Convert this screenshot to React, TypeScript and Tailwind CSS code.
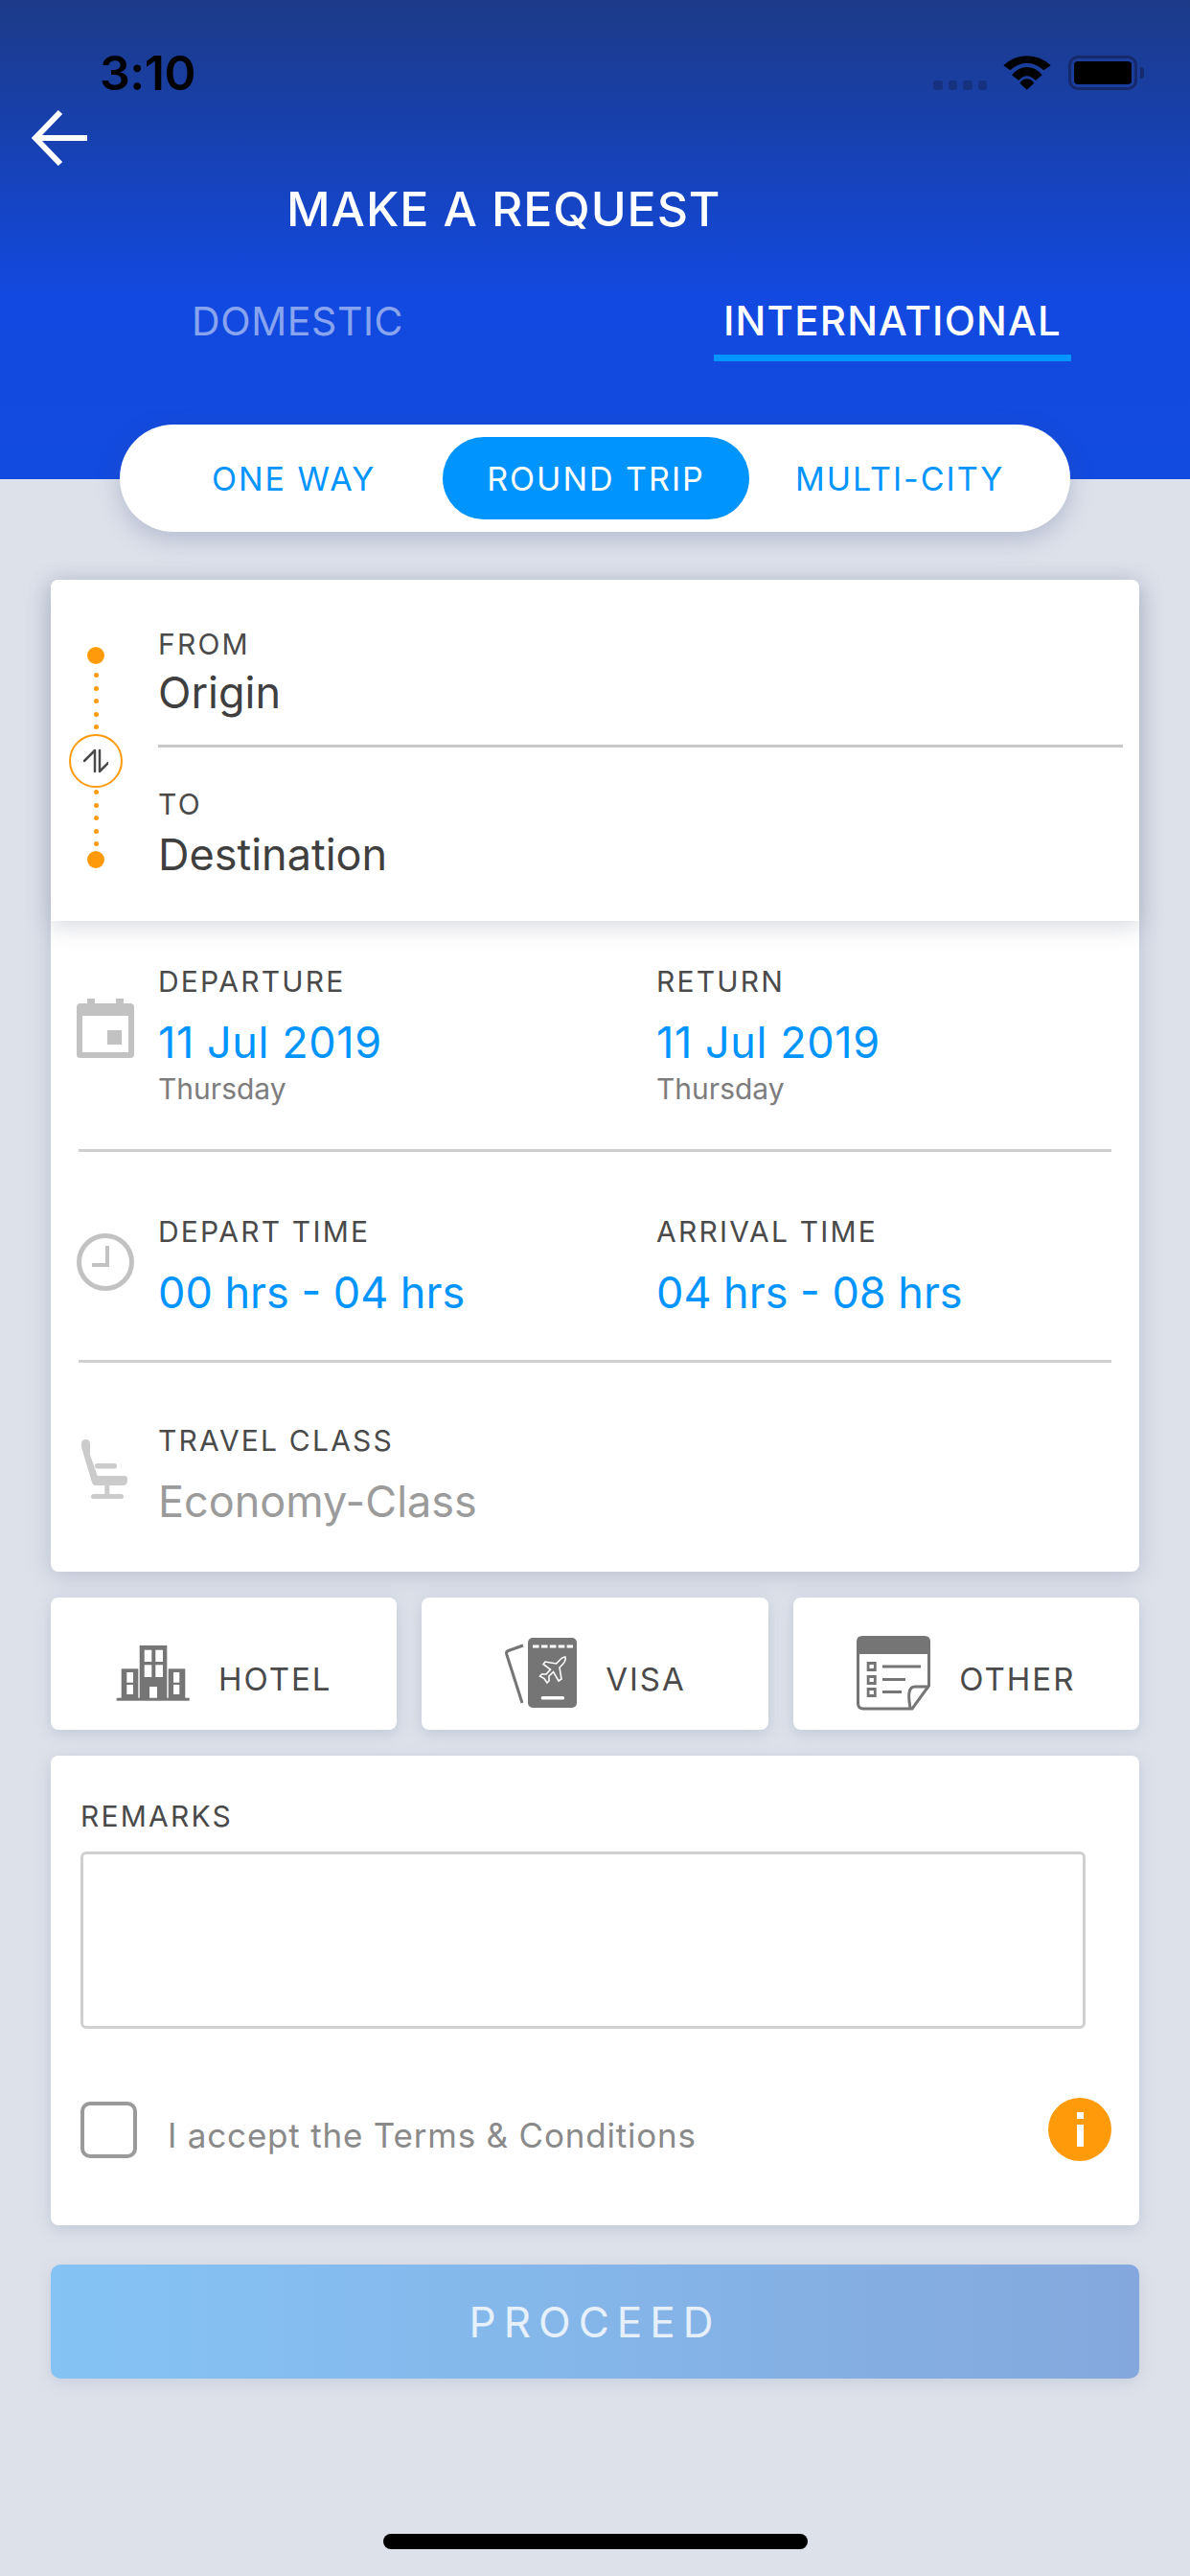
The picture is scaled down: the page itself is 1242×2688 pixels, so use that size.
import type { ReactNode } from 'react'

function Wifi() {
  return (
    <svg width="52" height="38" viewBox="0 0 52 38" className="ml-[16px]">
      <path d="M1.300 11.300Q12 1.300 25.700 1.300Q40 1.300 50.700 11.300L43.300 16.300Q35 8.700 25.700 8.700Q16.500 8.700 8.300 16.300Z" fill="#000" />
      <path d="M10 21.300Q17 13 25.700 13Q35 13 41.700 21.300L34.700 27Q30.500 22.300 25.700 22.300Q21 22.300 17.300 27Z" fill="#000" />
      <path d="M18.300 29.700Q21.500 25.300 25.700 25.300Q30 25.300 33.300 29.700L25.700 36.700Z" fill="#000" />
    </svg>
  )
}

function Battery() {
  return (
    <div className="ml-[17px] flex items-center">
      <div className="w-[72px] h-[36px] rounded-[10px] border-[3px] border-[#16296b] p-[3px]">
        <div className="w-full h-full rounded-[4px] bg-black" />
      </div>
      <div className="ml-[3px] w-[4px] h-[12px] rounded-r-[4px] bg-[#16296b]" />
    </div>
  )
}

function BackArrow() {
  return (
    <svg width="58" height="58" viewBox="0 0 58 58" fill="none" stroke="#fff" strokeWidth="6">
      <path d="M58 29H6" />
      <path d="M30 2L4 29L30 56" />
    </svg>
  )
}

function CalendarIcon() {
  return (
    <svg width="60" height="62" viewBox="0 0 60 62">
      <path fillRule="evenodd" fill="#c2c2c2" d="M4 5H11V0H19V5H41V0H49V5H56Q60 5 60 9V58Q60 62 56 62H4Q0 62 0 58V9Q0 5 4 5ZM6 18V56H54V18Z" />
      <rect x="32" y="33" width="15" height="15" fill="#c2c2c2" />
    </svg>
  )
}

function ClockIcon() {
  return (
    <svg width="60" height="60" viewBox="0 0 60 60" fill="none" stroke="#c2c2c2" strokeWidth="5">
      <circle cx="30" cy="30" r="27.500" />
      <path d="M32 13V33H16" strokeWidth="4" />
    </svg>
  )
}

function SeatIcon() {
  return (
    <svg width="48" height="64" viewBox="0 0 48 64" fill="#cbcbcb">
      <path d="M0 6Q0 1 4.500 1Q9 1 9 6V17L16.700 39H45Q48 39 48 42V44Q48 49 43 49H14Q12 49 11 46L0 9Z" />
      <rect x="14" y="26" width="23" height="5.500" rx="2.700" />
      <rect x="24.300" y="48" width="5" height="11" />
      <rect x="10" y="58" width="34" height="5" rx="2.500" />
    </svg>
  )
}

function SwapIcon() {
  return (
    <svg width="26" height="26" viewBox="0 0 26 26" fill="none" stroke="#4a4a4a" strokeWidth="2.500" strokeLinecap="round" strokeLinejoin="round">
      <path d="M1 13L12 2V24" />
      <path d="M17 2V24L26 15" />
    </svg>
  )
}

function HotelIcon() {
  return (
    <svg width="77" height="58" viewBox="0 0 77 58" fill="#757575">
      <rect x="24.700" y="0" width="28.600" height="56" />
      <rect x="5.700" y="24.300" width="17.600" height="31" />
      <rect x="54.700" y="24.300" width="17.600" height="31" />
      <rect x="0.700" y="54.700" width="76" height="3" />
      <g fill="#fff">
        <rect x="29.700" y="4.700" width="7.600" height="12.300" />
        <rect x="41.300" y="4.700" width="7.700" height="12.300" />
        <rect x="29.700" y="20.300" width="7.600" height="12.700" />
        <rect x="41.300" y="20.300" width="7.700" height="12.700" />
        <rect x="35" y="43" width="8" height="11.700" />
        <rect x="11.300" y="28" width="6.700" height="10.700" />
        <rect x="11.300" y="41" width="6.700" height="10" />
        <rect x="60" y="28" width="6.300" height="10.700" />
        <rect x="60" y="41" width="6.300" height="10" />
      </g>
    </svg>
  )
}

function VisaIcon() {
  return (
    <svg width="76" height="74" viewBox="0 0 76 74">
      <path d="M20 8L4.500 13.500Q2 14.500 2.700 17L19 68" fill="none" stroke="#757575" strokeWidth="3" />
      <rect x="25" y="0" width="51" height="73" rx="5" fill="#757575" />
      <path d="M30 9H72" stroke="#fff" strokeWidth="3" strokeDasharray="6.600 2.300" />
      <path d="M64 20Q65 24 61 28L58 31L60 43L57 45L51.500 35.500L47 40L47 45L45 47L42 42.500L37.500 40L39.500 38L44 38L48.500 33L41 27.500L43 25L54.500 27L57.500 24Q61 20 64 20Z" fill="none" stroke="#fff" strokeWidth="1.600" />
      <rect x="38.700" y="61" width="24.300" height="3.400" rx="1.500" fill="#fff" />
    </svg>
  )
}

function OtherIcon() {
  return (
    <svg width="77" height="78" viewBox="0 0 77 78">
      <path d="M1.500 14V70Q1.500 76 7 76H58L75.500 52V14" fill="none" stroke="#757575" strokeWidth="3" />
      <path d="M0 6Q0 0 6 0H71Q77 0 77 6V19H0Z" fill="#757575" />
      <path d="M56 75Q54 64 55 59Q56 53 61 53H76" fill="none" stroke="#757575" strokeWidth="3" />
      <g fill="#757575">
        <path fillRule="evenodd" d="M10.700 27H20.700V37H10.700ZM13.500 30V34H17.900V30Z" />
        <path fillRule="evenodd" d="M10.700 41H20.700V51H10.700ZM13.500 44V48H17.900V44Z" />
        <path fillRule="evenodd" d="M10.700 54H20.700V64H10.700ZM13.500 57V61H17.900V57Z" />
        <rect x="27" y="30.500" width="40" height="3" />
        <rect x="27" y="44" width="24" height="3" />
        <rect x="27" y="57" width="20" height="3" />
      </g>
    </svg>
  )
}

function Field({ label, value, sub, muted }: { label: string; value: string; sub?: string; muted?: boolean }) {
  return (
    <div className="flex-1">
      <div className="text-[30px] leading-[36px] tracking-[2.200px] text-[#4a4a4a]">{label}</div>
      <div className={`mt-[19px] text-[45px] leading-[54px] ${sub ? 'tracking-[0.600px]' : ''} ${muted ? 'text-[#9b9b9b]' : 'text-[#0094ff]'}`}>{value}</div>
      {sub && <div className="mt-[3px] text-[30px] leading-[36px] text-[#7d7d7d]">{sub}</div>}
    </div>
  )
}

function Row({ icon, children, className }: { icon: ReactNode; children: ReactNode; className: string }) {
  return (
    <div className={`flex ${className}`}>
      <div className="w-[112px] pl-[27px] flex-none">{icon}</div>
      {children}
    </div>
  )
}

function Extra({ icon, label }: { icon: ReactNode; label: string }) {
  return (
    <div className="flex-1 h-[138px] pt-[20px] rounded-[8px] bg-white shadow-[0_4px_16px_rgba(120,135,165,0.28)] flex items-center justify-center gap-[30px]">
      {icon}
      <span className="text-[33px] leading-[40px] mt-[12px] tracking-[2px] text-[#4a4a4a]">{label}</span>
    </div>
  )
}

export default function App() {
  const trip = ['ONE WAY', 'ROUND TRIP', 'MULTI-CITY']

  return (
    <div className="w-[1242px] h-[2688px] overflow-hidden bg-[#dde1ea] font-['Inter',sans-serif]">
      <header className="h-[500px] bg-[linear-gradient(180deg,#1c3a87_0%,#1249e0_62%,#124bdf_100%)]">
        {/* status bar */}
        <div className="flex items-center h-[38px] translate-y-[57px] pl-[104px] pr-[48px]">
          <span className="font-semibold text-[50px] leading-[38px] text-black tracking-[-0.500px]">3:10</span>
          <div className="flex-1" />
          <div className="flex gap-[6px] items-end self-end mb-[1px]">
            {[0, 1, 2, 3].map((i) => (
              <span key={i} className="w-[9.500px] h-[10px] rounded-[3px] bg-[#16317f]" />
            ))}
          </div>
          <Wifi />
          <Battery />
        </div>

        <div className="pl-[33px] pt-[77px]">
          <BackArrow />
        </div>
        <h1 className="mt-[15px] pl-[299px] text-[50px] leading-[60px] font-medium tracking-[0.900px] text-white">MAKE A REQUEST</h1>

        <div className="mt-[60px] flex">
          <div className="w-[745px] pl-[200px] pt-[2px]">
            <span className="text-[41px] leading-[50px] tracking-[0.600px] text-white/50">DOMESTIC</span>
          </div>
          <div className="w-[373px]">
            <div className="pt-[2px] text-center text-[42px] leading-[50px] tracking-[1.200px] font-medium text-white">INTERNATIONAL</div>
            <div className="mt-[10px] h-[7px] bg-[#0094ff]" />
          </div>
        </div>
      </header>

      <main className="px-[53px]">
        {/* trip type */}
        <div className="mx-[72px] mt-[-57px] h-[112px] rounded-full bg-white shadow-[0_8px_24px_rgba(60,80,130,0.25)] flex items-center pl-[96px]">
          <span className="w-[241px] text-[34px] tracking-[2px] text-[#0094ff]">{trip[0]}</span>
          <span className="w-[320px] h-[86px] mr-[48px] rounded-full bg-[#0094ff] flex items-center justify-center text-[34px] tracking-[2px] text-white">{trip[1]}</span>
          <span className="text-[34px] tracking-[2px] text-[#0094ff]">{trip[2]}</span>
        </div>

        <section className="mt-[50px] h-[1035px] rounded-[8px] bg-white shadow-[0_4px_24px_rgba(100,115,150,0.3)]">
          <div className="relative h-[356px] rounded-t-[8px] bg-white shadow-[0_6px_24px_rgba(110,120,145,0.28)] flex">
            <div className="w-[94px] flex-none pt-[70px] flex flex-col items-center">
              <span className="w-[18px] h-[18px] rounded-full bg-[#ff9a0a]" />
              <div className="mt-[9px] flex flex-col gap-[8.500px]">
                {[0, 1, 2, 3, 4].map((i) => (
                  <span key={i} className="w-[5px] h-[5px] rounded-full bg-[#ff9a0a]" />
                ))}
              </div>
              <div className="mt-[5px] w-[56px] h-[56px] flex-none rounded-full border-[2px] border-[#ff9a0a] bg-white flex items-center justify-center">
                <SwapIcon />
              </div>
              <div className="mt-[2px] flex flex-col gap-[8.500px]">
                {[0, 1, 2, 3, 4].map((i) => (
                  <span key={i} className="w-[5px] h-[5px] rounded-full bg-[#ff9a0a]" />
                ))}
              </div>
              <span className="mt-[5px] w-[18px] h-[18px] rounded-full bg-[#ff9a0a]" />
            </div>

            <div className="ml-[18px] flex-1 pr-[17px] pt-[49px]">
              <div className="text-[30px] leading-[36px] tracking-[2.200px] text-[#4a4a4a]">FROM</div>
              <div className="mt-[6px] text-[45px] leading-[54px] text-[#3f3f3f]">Origin</div>
              <div className="mt-[27px] h-[3px] bg-[#c8c8c8]" />
              <div className="mt-[41px] text-[30px] leading-[36px] tracking-[2.200px] text-[#4a4a4a]">TO</div>
              <div className="mt-[8px] text-[45px] leading-[54px] text-[#3f3f3f]">Destination</div>
            </div>
          </div>

          <Row className="pt-[45px]" icon={<div className="pt-[36px]"><CalendarIcon /></div>}>
            <div className="flex flex-1">
              <Field label="DEPARTURE" value="11 Jul 2019" sub="Thursday" />
              <div className="w-[504px]">
                <Field label="RETURN" value="11 Jul 2019" sub="Thursday" />
              </div>
            </div>
          </Row>
          <div className="mx-[29px] mt-[45px] h-[3px] bg-[#cfcfcf]" />

          <Row className="pt-[65px]" icon={<div className="pt-[20px]"><ClockIcon /></div>}>
            <div className="flex flex-1">
              <Field label="DEPART TIME" value="00 hrs - 04 hrs" />
              <div className="w-[504px]">
                <Field label="ARRIVAL TIME" value="04 hrs - 08 hrs" />
              </div>
            </div>
          </Row>
          <div className="mx-[29px] mt-[43px] h-[3px] bg-[#cfcfcf]" />

          <Row className="pt-[63px]" icon={<div className="pl-[5px] pt-[16px]"><SeatIcon /></div>}>
            <Field label="TRAVEL CLASS" value="Economy-Class" muted />
          </Row>
        </section>

        <div className="mt-[27px] flex gap-[26px]">
          <Extra icon={<HotelIcon />} label="HOTEL" />
          <Extra icon={<VisaIcon />} label="VISA" />
          <Extra icon={<OtherIcon />} label="OTHER" />
        </div>

        <section className="mt-[27px] h-[490px] rounded-[8px] bg-white shadow-[0_4px_16px_rgba(120,135,165,0.28)] pt-[45px] px-[31px]">
          <div className="text-[30px] leading-[36px] tracking-[2.200px] text-[#4a4a4a]">REMARKS</div>
          <div className="mt-[19px] mr-[25px] h-[185px] rounded-[6px] border-[3px] border-[#cfcfcf]" />
          <div className="mt-[72px] flex items-center">
            <div className="w-[59px] h-[59px] rounded-[10px] border-[4px] border-[#9a9a9a]" />
            <span className="ml-[32px] mt-[12px] flex-1 text-[35px] leading-[42px] tracking-[0.800px] text-[#8a8a8a]">I accept the Terms &amp; Conditions</span>
            <span className="w-[66px] h-[66px] mr-[-2px] rounded-full bg-[#ff9a0a] flex flex-col items-center justify-center gap-[6px]">
              <span className="w-[7px] h-[7px] bg-white" />
              <span className="w-[7px] h-[23px] bg-white" />
            </span>
          </div>
        </section>

        <button
          type="button"
          className="mt-[41px] w-full h-[119px] rounded-[10px] bg-[linear-gradient(90deg,#85c3f5,#84a8dd)] shadow-[0_4px_16px_rgba(120,135,165,0.2)] text-[44px] tracking-[8px] text-white/80"
        >
          PROCEED
        </button>
      </main>

      <div className="mt-[162px] mx-auto w-[443px] h-[16px] rounded-full bg-black" />
    </div>
  )
}
